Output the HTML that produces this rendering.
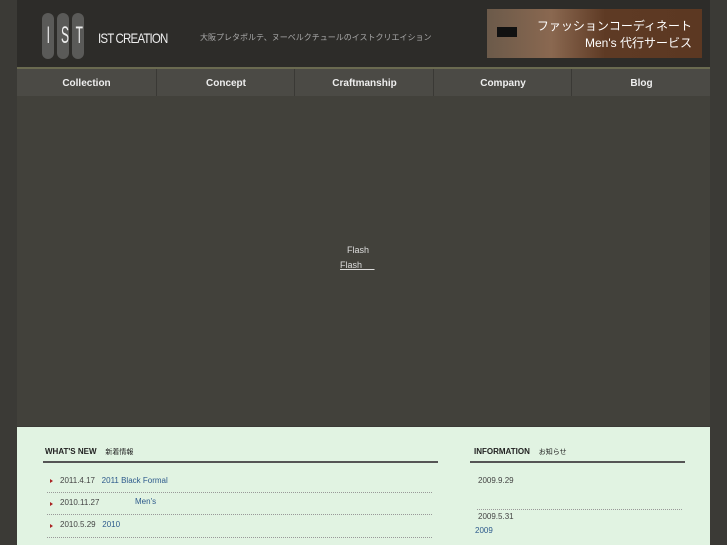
<!DOCTYPE html>
<html><head><meta charset="utf-8"><style>
body{margin:0;width:727px;height:545px;overflow:hidden;background:#3b3a36;font-family:"Liberation Sans","Noto Sans CJK JP",sans-serif;position:relative}
.wrap{position:absolute;left:17px;top:0;width:693px;height:545px}
.hdr{position:absolute;left:0;top:0;width:693px;height:67px;background:#2d2c29}
.pill{position:absolute;top:13px;width:12px;height:46px;border-radius:6px;background:#5a5a58;color:#eee;font:24px/46px "Liberation Sans",sans-serif;text-align:center;transform:scaleX(0.55);transform-origin:center}
.pill{transform:none}
.pill span{display:inline-block;transform:scaleX(0.5)}
.nav{position:absolute;left:0;top:67px;width:693px;height:29px;background:#4b4a45;border-top:2px solid #6a6a50;box-sizing:border-box}
.nav div{position:absolute;top:0;height:27px;line-height:29px;color:#eee;font-size:10px;font-weight:bold;text-align:center;border-left:1px solid #3a3935}
.flash{position:absolute;left:0;top:96px;width:693px;height:330px;background:#42413b}
.low{position:absolute;left:0;top:427px;width:693px;height:118px;background:#e1f3e2}
.t{position:absolute;font-size:8px;color:#444}
.l{color:#2d5a8c}
.dot{position:absolute;height:0;border-top:1px dotted #999}
.ar{position:absolute;width:0;height:0;border-left:3px solid #a22;border-top:2px solid transparent;border-bottom:2px solid transparent}
</style></head><body>
<div class="wrap">
<div class="hdr">
<div class="pill" style="left:25px"><span>I</span></div>
<div class="pill" style="left:40px"><span>S</span></div>
<div class="pill" style="left:55px"><span>T</span></div>
<div style="position:absolute;left:81px;top:30px;color:#eee;font-size:14px;letter-spacing:-1px;transform:scaleX(0.82);transform-origin:left">IST CREATION</div>
<div style="position:absolute;left:183px;top:32px;color:#aaa;font-size:8px">大阪プレタポルテ、ヌーベルクチュールのイストクリエイション</div>
<div style="position:absolute;left:470px;top:9px;width:215px;height:49px;background:linear-gradient(90deg,#6b5a4a 0,#8a6850 30%,#5e3a24 55%,#5c3822 100%)">
<div style="position:absolute;left:10px;top:18px;width:20px;height:10px;background:#111"></div>
<div style="position:absolute;right:10px;top:9px;color:#fff;font-size:12px;text-align:right;line-height:17px">ファッションコーディネート<br>Men's 代行サービス</div></div>
</div>
<div class="nav">
<div style="left:0;width:139px;border-left:0">Collection</div>
<div style="left:139px;width:138px">Concept</div>
<div style="left:277px;width:139px">Craftmanship</div>
<div style="left:416px;width:138px">Company</div>
<div style="left:554px;width:139px">Blog</div>
</div>
<div class="flash">
<div style="position:absolute;left:330px;top:149px;color:#ddd;font-size:9px">Flash</div>
<div style="position:absolute;left:323px;top:164px;color:#ddd;font-size:9px;text-decoration:underline">Flash&nbsp;&nbsp;&nbsp;&nbsp;&nbsp;</div>
</div>
<div class="low">
<div class="t" style="left:28px;top:20px;font-weight:bold;color:#222">WHAT'S NEW&nbsp;&nbsp;&nbsp;&nbsp;<span style="font-weight:normal;font-size:7px">新着情報</span></div>
<div style="position:absolute;left:26px;top:34px;width:395px;height:2px;background:#555"></div>
<div class="ar" style="left:33px;top:52px"></div><div class="t" style="left:43px;top:49px">2011.4.17&nbsp;&nbsp;&nbsp;<span class="l">2011 Black Formal</span></div>
<div class="dot" style="left:30px;top:65px;width:385px"></div>
<div class="ar" style="left:33px;top:75px"></div><div class="t" style="left:43px;top:71px">2010.11.27</div><div class="t l" style="left:118px;top:70px">Men's</div>
<div class="dot" style="left:30px;top:87px;width:385px"></div>
<div class="ar" style="left:33px;top:97px"></div><div class="t" style="left:43px;top:93px">2010.5.29&nbsp;&nbsp;&nbsp;<span class="l">2010</span></div>
<div class="dot" style="left:30px;top:110px;width:385px"></div>
<div class="t" style="left:457px;top:20px;font-weight:bold;color:#222">INFORMATION&nbsp;&nbsp;&nbsp;&nbsp;<span style="font-weight:normal;font-size:7px">お知らせ</span></div>
<div style="position:absolute;left:453px;top:34px;width:215px;height:2px;background:#555"></div>
<div class="t" style="left:461px;top:49px">2009.9.29</div>
<div class="dot" style="left:460px;top:82px;width:205px"></div>
<div class="t" style="left:461px;top:85px">2009.5.31</div>
<div class="t l" style="left:458px;top:99px">2009</div>
</div>
</div>
</body></html>
